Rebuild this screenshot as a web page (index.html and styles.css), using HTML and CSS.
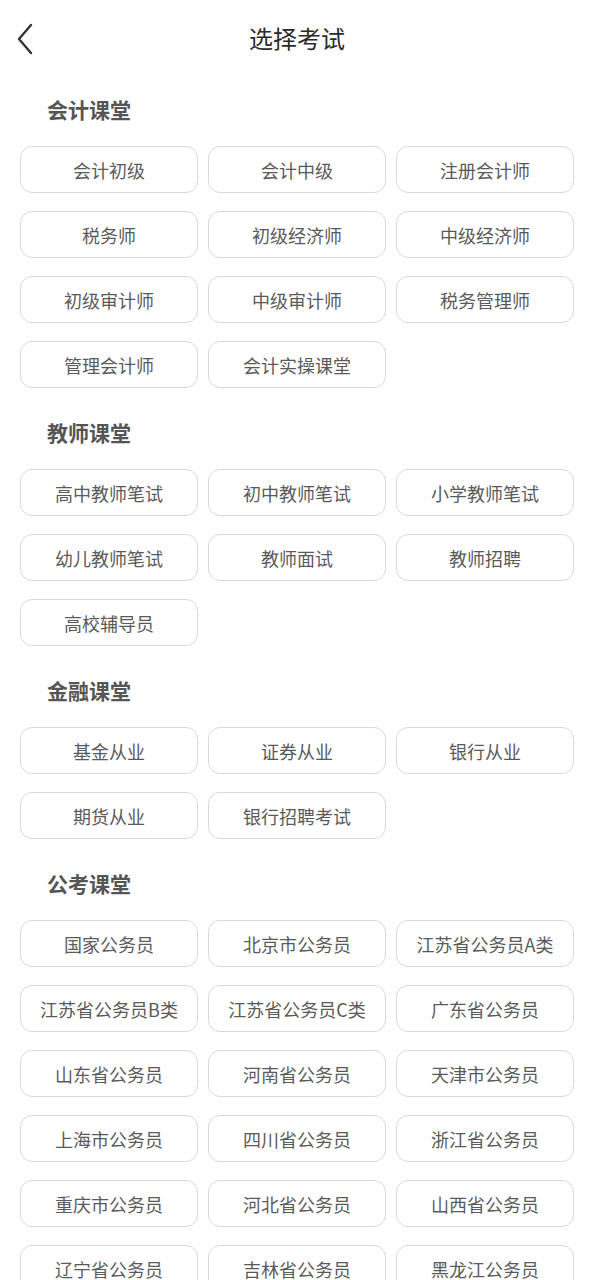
FILE: index.html
```html
<!DOCTYPE html>
<html lang="zh-CN">
<head>
<meta charset="utf-8">
<title>选择考试</title>
<link rel="stylesheet" href="styles.css">
</head>
<body>
<header class="topbar">
  <span class="back">
    <svg width="20" height="32" viewBox="0 0 20 32"><path d="M15 2 L3 16 L15 30" fill="none" stroke="#333" stroke-width="2.4" stroke-linecap="round" stroke-linejoin="round"/></svg>
  </span>
  <h1 class="title">选择考试</h1>
</header>
<main class="content">
  <section class="group">
    <h2 class="group-title">会计课堂</h2>
    <div class="grid">
      <div class="chip">会计初级</div><div class="chip">会计中级</div><div class="chip">注册会计师</div>
      <div class="chip">税务师</div><div class="chip">初级经济师</div><div class="chip">中级经济师</div>
      <div class="chip">初级审计师</div><div class="chip">中级审计师</div><div class="chip">税务管理师</div>
      <div class="chip">管理会计师</div><div class="chip">会计实操课堂</div>
    </div>
  </section>
  <section class="group">
    <h2 class="group-title">教师课堂</h2>
    <div class="grid">
      <div class="chip">高中教师笔试</div><div class="chip">初中教师笔试</div><div class="chip">小学教师笔试</div>
      <div class="chip">幼儿教师笔试</div><div class="chip">教师面试</div><div class="chip">教师招聘</div>
      <div class="chip">高校辅导员</div>
    </div>
  </section>
  <section class="group">
    <h2 class="group-title">金融课堂</h2>
    <div class="grid">
      <div class="chip">基金从业</div><div class="chip">证券从业</div><div class="chip">银行从业</div>
      <div class="chip">期货从业</div><div class="chip">银行招聘考试</div>
    </div>
  </section>
  <section class="group">
    <h2 class="group-title">公考课堂</h2>
    <div class="grid">
      <div class="chip">国家公务员</div><div class="chip">北京市公务员</div><div class="chip">江苏省公务员A类</div>
      <div class="chip">江苏省公务员B类</div><div class="chip">江苏省公务员C类</div><div class="chip">广东省公务员</div>
      <div class="chip">山东省公务员</div><div class="chip">河南省公务员</div><div class="chip">天津市公务员</div>
      <div class="chip">上海市公务员</div><div class="chip">四川省公务员</div><div class="chip">浙江省公务员</div>
      <div class="chip">重庆市公务员</div><div class="chip">河北省公务员</div><div class="chip">山西省公务员</div>
      <div class="chip">辽宁省公务员</div><div class="chip">吉林省公务员</div><div class="chip">黑龙江公务员</div>
    </div>
  </section>
</main>
</body>
</html>
```

FILE: styles.css
```css
* { box-sizing: border-box; }
html, body { margin: 0; padding: 0; background: #fff; }
body {
  font-family: "Noto Sans CJK SC", "Noto Sans", sans-serif;
  color: #555;
}
.topbar {
  height: 80px;
  padding-bottom: 4px;
  display: flex;
  align-items: center;
  justify-content: center;
  position: relative;
}
.back {
  position: absolute;
  left: 16px;
  top: 23px;
  display: flex;
}
.title {
  margin: 0;
  font-size: 24px;
  font-weight: 400;
  color: #2a2a2a;
  line-height: 32px;
}
.content {
  padding: 0 20px 40px;
}
.group-title {
  margin: 14px 0 0 27px;
  font-size: 21px;
  line-height: 30px;
  font-weight: 700;
  color: #555;
}
.group + .group .group-title { margin-top: 29px; }
.grid {
  margin-top: 22px;
  display: grid;
  grid-template-columns: repeat(3, 178px);
  column-gap: 10px;
  row-gap: 18px;
}
.chip {
  height: 47px;
  border: 1px solid #d9d9d9;
  border-radius: 12px;
  display: flex;
  align-items: center;
  justify-content: center;
  font-size: 18px;
  color: #5a5a5a;
}
```
